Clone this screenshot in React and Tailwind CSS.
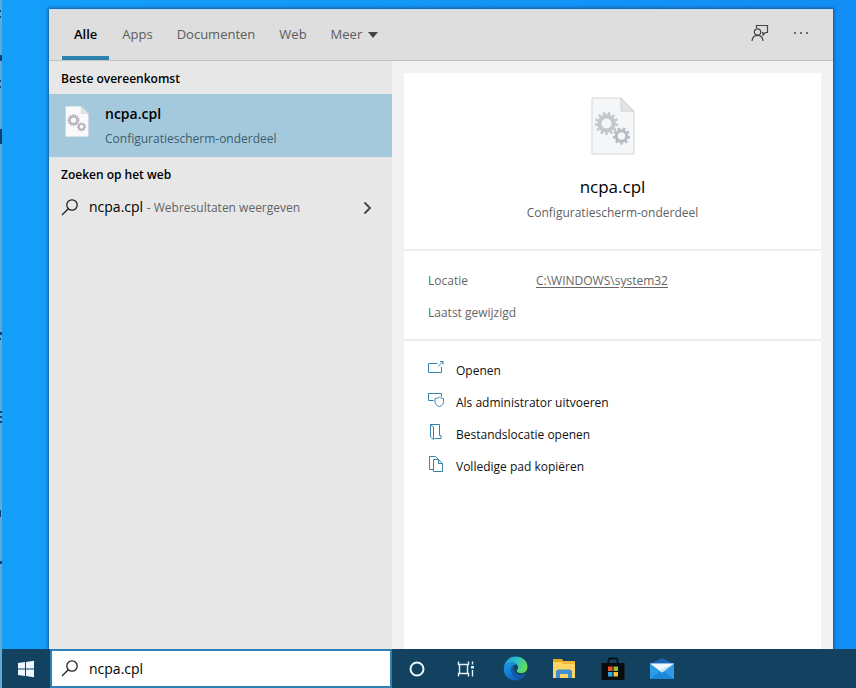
// App.jsx
import React, { useState } from 'react';

const tabs = ['Alle', 'Apps', 'Documenten', 'Web'];

const OpenIcon = () => (
  <svg width="16" height="16" viewBox="0 0 16 16" fill="none" stroke="currentColor">
    <path d="M9.5 3.5h-9v9h13V7" />
    <path d="M10 6.5l5-5M12 1.5h3v3" />
  </svg>
);

const AdminIcon = () => (
  <svg width="16" height="16" viewBox="0 0 16 16" fill="none" stroke="currentColor">
    <path d="M5.5 8.5h-5v-7h13v3" />
    <path d="M11.500 5c-1 1-2.700 1.400-4.500 1.400v3.200c0 2.400 1.900 4.100 4.500 5 2.600-.9 4-2.600 4-5V6.400c-1.500 0-3-.4-4-1.400z" />
  </svg>
);

const LocationIcon = () => (
  <svg width="16" height="16" viewBox="0 0 16 16" fill="none" stroke="currentColor">
    <path d="M2.500.5h9v11h1.500v3H6.500" />
    <path d="M2.500.5l3 2.500v12.500l-3-2.500z" />
  </svg>
);

const CopyIcon = () => (
  <svg width="16" height="16" viewBox="0 0 16 16" fill="none" stroke="currentColor">
    <path d="M5 13.500H1.500V.5h6l2.500 2.500" />
    <path d="M5.500 3.500h5l4 4v8h-9z" />
    <path d="M10.500 3.500v4h4" />
  </svg>
);

const actions = [
  { label: 'Openen', icon: OpenIcon },
  { label: 'Als administrator uitvoeren', icon: AdminIcon },
  { label: 'Bestandslocatie openen', icon: LocationIcon },
  { label: 'Volledige pad kopiëren', icon: CopyIcon },
];

const Gear = ({ cx, cy, r, color, teeth }) => (
  <g stroke={color} fill="none">
    <circle cx={cx} cy={cy} r={r * 0.62} strokeWidth={r * 0.36} />
    <circle cx={cx} cy={cy} r={r * 0.88} strokeWidth={r * 0.26} pathLength={teeth * 2} strokeDasharray="1 1" />
  </g>
);

const FileIcon = ({ className, plain }) => (
  <svg className={className} viewBox="0 0 44 58">
    <path
      d="M1 1h29l13 13v43H1z"
      fill={plain ? '#fafafa' : '#f4f6f8'}
      stroke={plain ? '#e4e8ec' : '#d3d5d7'}
    />
    <path d="M30 1l13 13H30z" fill="#e1e3e4" stroke="#c9cccd" strokeWidth="0.8" />
    <Gear cx={15.500} cy={26.500} r={11.500} teeth={13} color={plain ? '#b3b3bb' : '#c3c9cb'} />
    <Gear cx={30.500} cy={39} r={8.500} teeth={9} color={plain ? '#b0b0b9' : '#b4bbc2'} />
  </svg>
);

const SearchIcon = () => (
  <svg className="shrink-0" width="18" height="18" viewBox="0 0 18 18" fill="none" stroke="#222" strokeWidth="1.3">
    <circle cx="11" cy="6" r="5.200" />
    <path d="M7.300 9.800L1 16" />
  </svg>
);

const FeedbackIcon = () => (
  <svg width="18" height="18" viewBox="0 0 18 18" fill="none" stroke="#444" strokeWidth="1.2">
    <path d="M5.500 4V1.500h11v7h-2l-2.500 2.500V8.500h-1" />
    <circle cx="6.500" cy="8" r="3.200" />
    <path d="M1 17c.3-3.500 2.500-5.700 5.500-5.700S11.700 13.500 12 17" />
  </svg>
);

const WindowsIcon = () => (
  <svg width="18" height="18" viewBox="0 0 18 18" fill="#eef8ff">
    <path d="M1 3l7-1v6.500H1zM9 1.900L17 .8v7.700H9zM1 9.500h7V16l-7-1zM9 9.500h8v7.700l-8-1.100z" />
  </svg>
);

const CortanaIcon = () => (
  <svg width="18" height="18" viewBox="0 0 18 18" fill="none" stroke="#eaf8ff" strokeWidth="2">
    <circle cx="9" cy="9" r="6.500" />
  </svg>
);

const TaskViewIcon = () => (
  <svg width="18" height="18" viewBox="0 0 18 18" fill="none" stroke="#dff0f8" strokeWidth="1.4">
    <path d="M1.500 1.500v3h10v-3M1.500 16.500v-3h10v3M2.500 4.500v9M10.500 4.500v9" />
    <path d="M15.500 1.500v3M15.500 10v6.500" />
    <path d="M14 6h3v2.500h-3z" fill="#dff0f8" stroke="none" />
  </svg>
);

const EdgeIcon = () => (
  <svg width="25" height="25" viewBox="0 0 24 24">
    <defs>
      <linearGradient id="edge-top" x1="0" y1="0.300" x2="1" y2="0.600">
        <stop offset="0" stopColor="#1d9fe8" />
        <stop offset="0.500" stopColor="#2fc3c4" />
        <stop offset="1" stopColor="#6bdc4b" />
      </linearGradient>
      <linearGradient id="edge-left" x1="0" y1="0" x2="0.500" y2="1">
        <stop offset="0" stopColor="#1b9de6" />
        <stop offset="1" stopColor="#1265c2" />
      </linearGradient>
    </defs>
    <path d="M1 11C1.500 4.800 6.300.5 12 .5c6.700 0 11.500 4.600 11.500 9.800 0 3.600-2.600 6.200-6 6.200-2.600 0-4.300-1-4.300-2.200 0-.9 1.300-1.200 1.300-3.200 0-2.700-2.700-4.800-6-4.800C5.300 6.300 2.500 8 1 11z" fill="url(#edge-top)" />
    <path d="M.7 12.500C.9 8.700 4.500 6.300 8.500 6.300c1.900 0 3.600.7 4.700 1.800-3.200-.2-5.200 2.500-5.200 5.400 0 4.400 3.800 8.300 8.300 8.500-1.300.9-2.900 1.400-4.500 1.400C5.500 23.400.6 18.500.7 12.500z" fill="url(#edge-left)" />
    <path d="M8 13.500c0-2.300 1.200-4.300 3.200-5.200-1.500 2.200-.9 5.300.7 7.300 2.300 2.900 6.400 3.200 9.800 1.500.5-.2.800.2.500.6-1.300 2.200-3.500 3.900-5.900 4.300C11.800 21.800 8 17.900 8 13.500z" fill="#1459a3" />
  </svg>
);

const ExplorerIcon = () => (
  <svg width="24" height="22" viewBox="0 0 24 22">
    <path d="M1 1h9l2 3H1z" fill="#e9a820" />
    <path d="M1 4h22v16H1z" fill="#fbd565" />
    <path d="M11 3h12v3H10z" fill="#f3b73c" />
    <path d="M4 20v-7l2-1.500h12l2 1.500v7h-4v-4H8v4z" fill="#4390d0" />
  </svg>
);

const StoreIcon = () => (
  <svg width="24" height="24" viewBox="0 0 24 24">
    <path d="M7.500 6V3.500Q7.500 1.500 9.500 1.500h5q2 0 2 2V6" fill="none" stroke="#0a1118" strokeWidth="1.800" />
    <path d="M.5 6h23v15.500q0 1.500-1.500 1.500H2q-1.500 0-1.500-1.500z" fill="#090b0d" />
    <path d="M7 9.500h4.500V14H7z" fill="#e9532a" />
    <path d="M12.500 9.500H17V14h-4.500z" fill="#8cc03d" />
    <path d="M7 15h4.500v4.500H7z" fill="#2ba5e0" />
    <path d="M12.500 15H17v4.500h-4.500z" fill="#f6c432" />
  </svg>
);

const MailIcon = () => (
  <svg width="26" height="24" viewBox="0 0 26 24">
    <path d="M1 7l12-6 12 6z" fill="#1a66b4" />
    <path d="M1 6.500h24V22H1z" fill="#2e9be6" />
    <path d="M1 22l12-9 12 9z" fill="#1d86d8" />
    <path d="M1 6.500h24L13 15.500z" fill="#f1f8fd" />
    <path d="M25 6.500L13 15.500l-3-2.200z" fill="#c5e5f7" />
  </svg>
);

const taskbarApps = [
  { label: 'Cortana', icon: CortanaIcon },
  { label: 'Taakweergave', icon: TaskViewIcon },
  { label: 'Microsoft Edge', icon: EdgeIcon },
  { label: 'Verkenner', icon: ExplorerIcon },
  { label: 'Microsoft Store', icon: StoreIcon },
  { label: 'Mail', icon: MailIcon },
];

const Header = () => (
  <header className="flex h-[52px] items-stretch border-t border-b border-t-[#c4e0f4] border-b-[#c3c3c3] bg-[#dedede] pl-[13px] pr-[22px] text-[13px] text-[#5c5c5c]">
    <nav className="flex items-stretch">
      {tabs.map((tab, i) => (
        <button
          key={tab}
          className={`border-b-4 px-3 pt-1 ${
            i === 0 ? 'mr-px border-[#2c84ae] font-semibold text-black' : 'border-transparent'
          }`}
        >
          {tab}
        </button>
      ))}
      <button className="flex items-center gap-1.5 border-b-4 border-transparent px-3 pt-1">
        Meer
        <svg width="10" height="6" viewBox="0 0 10 6" fill="#444">
          <path d="M0 0h10L5 6z" />
        </svg>
      </button>
    </nav>
    <div className="ml-auto flex items-center gap-[22px] pb-1">
      <button aria-label="Feedback">
        <FeedbackIcon />
      </button>
      <button aria-label="Opties" className="flex w-5 justify-center">
        <svg width="16" height="4" viewBox="0 0 16 4" fill="#444">
          <circle cx="2" cy="2" r="1" />
          <circle cx="8" cy="2" r="1" />
          <circle cx="14" cy="2" r="1" />
        </svg>
      </button>
    </div>
  </header>
);

const Results = () => (
  <section className="bg-[#e7e7e7]">
    <h2 className="px-3 pt-[9px] pb-[7px] text-[12px] leading-[17px] font-semibold">Beste overeenkomst</h2>
    <button className="flex w-full items-start gap-4 bg-[#a5c9dc] px-4 pt-2 pb-[5px] text-left">
      <FileIcon className="mt-1 h-[31px] w-6" plain />
      <span className="flex flex-col">
        <span className="text-[14px] leading-6 font-semibold">ncpa.cpl</span>
        <span className="text-[12px] leading-[26px] text-[#3d5c6d]">Configuratiescherm-onderdeel</span>
      </span>
    </button>
    <h2 className="px-3 pt-[9px] pb-[7px] text-[12px] leading-[17px] font-semibold">Zoeken op het web</h2>
    <button className="flex w-full items-center py-[5px] pr-5 pl-3 text-left">
      <SearchIcon />
      <span className="ml-2.5 text-[14px] leading-6">
        ncpa.cpl <span className="text-[12px] text-[#636363]">- Webresultaten weergeven</span>
      </span>
      <svg className="ml-auto" width="9" height="14" viewBox="0 0 9 14" fill="none" stroke="#444" strokeWidth="1.800">
        <path d="M1.500 1.500L7 7l-5.500 5.500" />
      </svg>
    </button>
  </section>
);

const Details = () => (
  <section className="flex flex-col bg-[#f2f2f2] px-3 pt-3">
    <div className="flex-1 bg-white">
      <div className="flex flex-col items-center pt-6 pb-[26px]">
        <FileIcon className="h-[58px] w-11" />
        <h1 className="mt-5 text-[17px] leading-6">ncpa.cpl</h1>
        <p className="mt-1 text-[12px] leading-5 text-[#5f5f5f]">Configuratiescherm-onderdeel</p>
      </div>
      <dl className="grid grid-cols-[108px_1fr] gap-y-3 border-y-2 border-[#ededed] px-6 pt-5 pb-4 text-[12px] leading-5 text-[#666]">
        <dt>Locatie</dt>
        <dd>
          <a href="#locatie" className="underline underline-offset-2">C:\WINDOWS\system32</a>
        </dd>
        <dt>Laatst gewijzigd</dt>
        <dd />
      </dl>
      <ul className="px-6 py-[14px]">
        {actions.map(({ label, icon: Icon }) => (
          <li key={label}>
            <button className="flex h-8 w-full items-center gap-3 text-left text-[12px] text-[#111]">
              <span className="pb-1.5 text-[#3584ad]">
                <Icon />
              </span>
              {label}
            </button>
          </li>
        ))}
      </ul>
    </div>
  </section>
);

const Taskbar = () => {
  const [query, setQuery] = useState('ncpa.cpl');

  return (
    <footer className="flex h-[39px] items-stretch bg-[#12425f]">
      <button aria-label="Start" className="flex w-12 items-center justify-center">
        <WindowsIcon />
      </button>
      <label className="mr-px flex w-[40%] items-center gap-2.5 border-2 border-[#2d80b8] bg-white pl-[9px]">
        <SearchIcon />
        <input
          aria-label="Zoeken"
          className="min-w-0 flex-1 bg-transparent text-[14px] outline-none"
          value={query}
          onChange={(e) => setQuery(e.target.value)}
        />
      </label>
      {taskbarApps.map(({ label, icon: Icon }) => (
        <button key={label} aria-label={label} className="flex w-[49px] items-center justify-center">
          <Icon />
        </button>
      ))}
    </footer>
  );
};

// Slices of the desktop labels that peek in along the left edge
const EdgeMarks = () => (
  <svg className="absolute top-0 left-0" width="2" height="648" fill="#173f66">
    <path d="M0 10h1v2H0zM0 16h1v2H0zM0 55h2v6H0zM0 80h1v2H0zM0 86h1v2H0zM0 129h2v15H0zM0 332h2v3H0zM0 338h1v2H0zM0 411h2v2H0zM0 416h2v2H0zM0 421h2v2H0zM0 510h1v7H0zM0 561h2v3H0z" />
  </svg>
);

const App = () => (
  <div className="relative flex min-h-screen flex-col border-l-2 border-[#62a9d6] bg-[#149cf8] font-['Open_Sans','Noto_Sans',sans-serif] text-black">
    <main className="flex flex-1 bg-gradient-to-r from-[#149ffa] to-[#128df5] pt-[9px] pr-[23px] pl-[47px]">
      <div className="flex flex-1 flex-col shadow-[0_0_3px_1px_#15558c]">
        <Header />
        <div className="grid flex-1 grid-cols-[7fr_9fr]">
          <Results />
          <Details />
        </div>
      </div>
    </main>
    <Taskbar />
    <div className="absolute top-0 -left-0.5">
      <EdgeMarks />
    </div>
  </div>
);

export default App;
